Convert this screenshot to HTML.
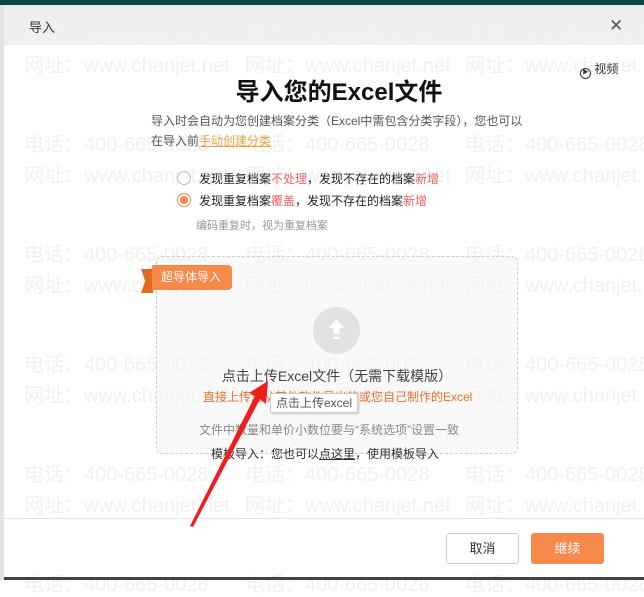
<!DOCTYPE html>
<html><head><meta charset="utf-8"><style>
*{margin:0;padding:0;box-sizing:border-box}
body{width:644px;height:580px;overflow:hidden;background:#fff;font-family:"Liberation Sans","Noto Sans CJK SC",sans-serif;position:relative;color:#333}
.a{position:absolute;white-space:nowrap}
.wm{position:absolute;font-size:20px;color:#f1f1f1;white-space:nowrap;font-family:"Liberation Sans","Noto Sans CJK SC",sans-serif}
</style></head><body>
<div class="a" style="left:0;top:0;width:644px;height:5px;background:#0d4a44"></div>
<div class="a" style="left:0;top:5px;width:4px;height:575px;background:#e4e4e4"></div>
<div class="a" style="left:4px;top:5px;width:640px;height:40px;background:#efefef"></div>

<div class="wm" style="left:24px;top:18px">电话：400-665-0028</div><div class="wm" style="left:245px;top:18px">电话：400-665-0028</div><div class="wm" style="left:465px;top:18px">电话：400-665-0028</div>
<div class="wm" style="left:24px;top:49px">网址：www.chanjet.net</div><div class="wm" style="left:245px;top:49px">网址：www.chanjet.net</div><div class="wm" style="left:465px;top:49px">网址：www.chanjet.net</div>
<div class="wm" style="left:24px;top:128px">电话：400-665-0028</div><div class="wm" style="left:245px;top:128px">电话：400-665-0028</div><div class="wm" style="left:465px;top:128px">电话：400-665-0028</div>
<div class="wm" style="left:24px;top:159px">网址：www.chanjet.net</div><div class="wm" style="left:245px;top:159px">网址：www.chanjet.net</div><div class="wm" style="left:465px;top:159px">网址：www.chanjet.net</div>
<div class="wm" style="left:24px;top:238px">电话：400-665-0028</div><div class="wm" style="left:245px;top:238px">电话：400-665-0028</div><div class="wm" style="left:465px;top:238px">电话：400-665-0028</div>
<div class="wm" style="left:24px;top:269px">网址：www.chanjet.net</div><div class="wm" style="left:245px;top:269px">网址：www.chanjet.net</div><div class="wm" style="left:465px;top:269px">网址：www.chanjet.net</div>
<div class="wm" style="left:24px;top:348px">电话：400-665-0028</div><div class="wm" style="left:245px;top:348px">电话：400-665-0028</div><div class="wm" style="left:465px;top:348px">电话：400-665-0028</div>
<div class="wm" style="left:24px;top:379px">网址：www.chanjet.net</div><div class="wm" style="left:245px;top:379px">网址：www.chanjet.net</div><div class="wm" style="left:465px;top:379px">网址：www.chanjet.net</div>
<div class="wm" style="left:24px;top:458px">电话：400-665-0028</div><div class="wm" style="left:245px;top:458px">电话：400-665-0028</div><div class="wm" style="left:465px;top:458px">电话：400-665-0028</div>
<div class="wm" style="left:24px;top:489px">网址：www.chanjet.net</div><div class="wm" style="left:245px;top:489px">网址：www.chanjet.net</div><div class="wm" style="left:465px;top:489px">网址：www.chanjet.net</div>
<div class="wm" style="left:24px;top:568px">电话：400-665-0028</div><div class="wm" style="left:245px;top:568px">电话：400-665-0028</div><div class="wm" style="left:465px;top:568px">电话：400-665-0028</div>
<div class="a" style="left:4px;top:577px;width:640px;height:3px;background:#444"></div>

<div class="a" style="left:29px;top:17px;font-size:13px;color:#333">导入</div>
<div class="a" style="left:609px;top:16px;font-size:17px;color:#555">✕</div>
<div class="a" style="left:580px;top:60px;font-size:12px;color:#333"><span style="display:inline-block;width:11px;height:11px;border:1px solid #333;border-radius:50%;font-size:6px;line-height:9px;text-align:center;vertical-align:-1px">▶</span> 视频</div>
<div class="a" style="left:17px;width:644px;text-align:center;top:72px;font-size:24px;font-weight:bold;color:#111">导入您的Excel文件</div>
<div class="a" style="left:151px;top:112px;font-size:12px;color:#555">导入时会自动为您创建档案分类（Excel中需包含分类字段），您也可以</div>
<div class="a" style="left:151px;top:132px;font-size:12px;color:#555">在导入前<span style="color:#e8a33a;text-decoration:underline">手动创建分类</span></div>
<div class="a" style="left:177px;top:171px;width:14px;height:14px;border:1px solid #bbb;border-radius:50%;background:#fff"></div>
<div class="a" style="left:199px;top:170px;font-size:12px;color:#222">发现重复档案<span style="color:#f06060">不处理</span>，发现不存在的档案<span style="color:#f06060">新增</span></div>
<div class="a" style="left:177px;top:193px;width:14px;height:14px;border:1px solid #f7894a;border-radius:50%"><div style="margin:2px;width:8px;height:8px;border-radius:50%;background:#f7894a"></div></div>
<div class="a" style="left:199px;top:192px;font-size:12px;color:#222">发现重复档案<span style="color:#f06060">覆盖</span>，发现不存在的档案<span style="color:#f06060">新增</span></div>
<div class="a" style="left:196px;top:217px;font-size:11px;color:#999">编码重复时，视为重复档案</div>

<div class="a" style="left:156px;top:256px;width:362px;height:198px;border:1px dashed #d0d0d0;border-radius:6px;background:rgba(245,245,245,0.6)"></div>
<div class="a" style="left:141px;top:269px;width:12px;height:24px;background:#e06a20;clip-path:polygon(0 0,100% 0,100% 100%,0 100%,35% 50%)"></div>
<div class="a" style="left:152px;top:265px;width:80px;height:25px;background:#f7894a;border-radius:2px 4px 4px 2px;color:#fff;font-size:12px;line-height:25px;padding-left:9px">超导体导入</div>
<div class="a" style="left:313px;top:307px;width:47px;height:47px;border-radius:50%;background:#e2e2e2">
<svg width="47" height="47" viewBox="0 0 47 47"><path d="M23.5 12 L31 21 H26.5 V27 H20.5 V21 H16 Z" fill="#fff"/><rect x="20.5" y="29.5" width="6" height="2.5" fill="#fff"/></svg></div>
<div class="a" style="left:0;width:674px;text-align:center;top:366px;font-size:14px;color:#444">点击上传Excel文件（无需下载模版）</div>
<div class="a" style="left:203px;top:388px;font-size:12px;color:#f0702a">直接上传您从其他软件导出的或您自己制作的Excel</div>
<div class="a" style="left:270px;top:393px;width:88px;height:20px;background:#fff;border:1px solid #ccc;box-shadow:1px 1px 2px rgba(0,0,0,.2);font-size:12px;color:#555;line-height:18px;padding-left:5px">点击上传excel</div>
<div class="a" style="left:199px;top:421px;font-size:12px;color:#888">文件中数量和单价小数位要与“系统选项”设置一致</div>
<div class="a" style="left:211px;top:445px;font-size:12px;color:#333">模板导入：您也可以<span style="text-decoration:underline">点这里</span>，使用模板导入</div>

<div class="a" style="left:4px;top:518px;width:640px;height:1px;background:#e5e5e5"></div>
<div class="a" style="left:446px;top:533px;width:73px;height:31px;border:1px solid #ccc;border-radius:3px;background:#fff;font-size:13px;text-align:center;line-height:29px;color:#333">取消</div>
<div class="a" style="left:531px;top:533px;width:73px;height:31px;border-radius:3px;background:#f7894a;font-size:13px;text-align:center;line-height:31px;color:#fff">继续</div>

<svg class="a" style="left:0;top:0" width="644" height="580"><path d="M190 526 L255 396 L249 393 L268 381 L266 404 L260 399 L193 527 Z" fill="#f21c1c"/></svg>
</body></html>
